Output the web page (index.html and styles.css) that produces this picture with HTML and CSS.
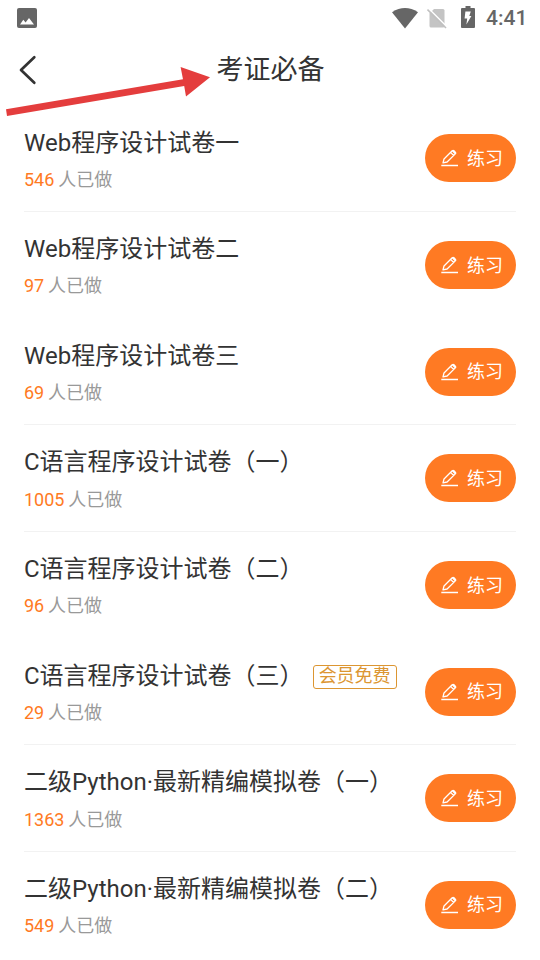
FILE: index.html
```html
<!DOCTYPE html>
<html lang="zh-CN">
<head>
    <meta charset="UTF-8">
    <title>考证必备</title>
    <link rel="stylesheet" href="styles.css">
</head>
<body>
    <!-- 图标 -->
    <svg class="defs" width="0" height="0">
        <symbol id="pen" viewBox="0 0 18 18">
            <path d="M2 13.9 L3 10 L11.2 1.8 Q12.1 .9 13 1.8 L14.3 3.1 Q15.2 4 14.3 4.9 L6.1 13 Z M9.6 3.4 L12.7 6.5 M11.4 1.9 L14.2 4.7" fill="none" stroke="#fff" stroke-width="1.3" stroke-linejoin="round"/>
            <path d="M.3 16.5 H17" stroke="#fff" stroke-width="1.5"/>
        </symbol>
    </svg>

    <div class="status">
        <svg class="photo" width="20" height="20" viewBox="0 0 20 20">
            <rect width="20" height="20" rx="2" fill="#666"/>
            <path d="M3 16.5 L6.3 11.8 L8.6 14.4 L12 10 L17 16.5 Z" fill="#fff"/>
        </svg>
        <svg class="wifi" width="26" height="21" viewBox="0 0 26 21">
            <path d="M0 4.2 Q13 -4.2 26 4.2 L13 20.5 Z" fill="#666"/>
        </svg>
        <svg class="sim" width="20" height="21" viewBox="0 0 20 21">
            <path d="M7 1 H16 Q17.5 1 17.5 2.5 V18 Q17.5 19.5 16 19.5 H4 Q2.5 19.5 2.5 18 V5.5 Z" fill="#c4c4c4"/>
            <path d="M1.5 .5 L20 19" stroke="#fff" stroke-width="1.6"/>
            <path d="M.5 1.5 L19 20" stroke="#c0c0c0" stroke-width="1.6"/>
        </svg>
        <svg class="battery" width="14" height="22" viewBox="0 0 14 22">
            <path d="M4.5 0 H9.5 V2 H13 Q14 2 14 3 V21 Q14 22 13 22 H1 Q0 22 0 21 V3 Q0 2 1 2 H4.5 Z" fill="#666"/>
            <path d="M4.4 5.5 H9.8 L8.3 10 H10.4 L5.4 18.5 L6.2 12.6 H3.6 Z" fill="#fff"/>
        </svg>
        <span class="time">4:41</span>
    </div>

    <div class="header">
        <svg class="back" width="18" height="30" viewBox="0 0 18 30">
            <path d="M15.3 2.3 L2 15 L15.3 27.7" fill="none" stroke="#333" stroke-width="2.7" stroke-linecap="round" stroke-linejoin="round"/>
        </svg>
        <h1>考证必备</h1>
        <svg class="arrow" width="210" height="60" viewBox="0 60 210 60">
            <path d="M6 109.2 L183 79.2 L180.6 67 L210 77.3 L186 96.5 L184.2 86 L7 116 Z" fill="#e43d3d"/>
        </svg>
    </div>

    <ul class="list">
        <li>
            <div class="info">
                <h2>Web程序设计试卷一</h2>
                <p><em>546</em> 人已做</p>
            </div>
            <a class="btn"><svg><use href="#pen"/></svg><span>练习</span></a>
        </li>
        <li class="noline">
            <div class="info">
                <h2>Web程序设计试卷二</h2>
                <p><em>97</em> 人已做</p>
            </div>
            <a class="btn"><svg><use href="#pen"/></svg><span>练习</span></a>
        </li>
        <li>
            <div class="info">
                <h2>Web程序设计试卷三</h2>
                <p><em>69</em> 人已做</p>
            </div>
            <a class="btn"><svg><use href="#pen"/></svg><span>练习</span></a>
        </li>
        <li>
            <div class="info">
                <h2>C语言程序设计试卷（一）</h2>
                <p><em>1005</em> 人已做</p>
            </div>
            <a class="btn"><svg><use href="#pen"/></svg><span>练习</span></a>
        </li>
        <li class="noline">
            <div class="info">
                <h2>C语言程序设计试卷（二）</h2>
                <p><em>96</em> 人已做</p>
            </div>
            <a class="btn"><svg><use href="#pen"/></svg><span>练习</span></a>
        </li>
        <li>
            <div class="info">
                <h2>C语言程序设计试卷（三）<span class="tag">会员免费</span></h2>
                <p><em>29</em> 人已做</p>
            </div>
            <a class="btn"><svg><use href="#pen"/></svg><span>练习</span></a>
        </li>
        <li>
            <div class="info">
                <h2>二级Python·最新精编模拟卷（一）</h2>
                <p><em>1363</em> 人已做</p>
            </div>
            <a class="btn"><svg><use href="#pen"/></svg><span>练习</span></a>
        </li>
        <li class="noline">
            <div class="info">
                <h2>二级Python·最新精编模拟卷（二）</h2>
                <p><em>549</em> 人已做</p>
            </div>
            <a class="btn"><svg><use href="#pen"/></svg><span>练习</span></a>
        </li>
    </ul>
</body>
</html>
```
FILE: styles.css
```css
*{
    margin:0;
    padding:0;
    box-sizing:border-box;
}
body{
    width:540px;
    height:960px;
    overflow:hidden;
    background:#fff;
    color:#333;
    font-family:Roboto,"Noto Sans CJK SC",sans-serif;
}
svg{
    display:block;
    flex:none;
}
.defs{
    position:absolute;
}
.status{
    display:flex;
    align-items:center;
    height:36px;
    padding:0 13px 0 17px;
    color:#666;
}
.wifi{
    margin-left:auto;
}
.sim{
    margin-left:9px;
}
.battery{
    margin:0 0 2px 14px;
}
.time{
    width:41px;
    margin-left:11px;
    font-size:21px;
    font-weight:500;
    line-height:38px;
    white-space:nowrap;
}
.header{
    position:relative;
    display:flex;
    align-items:center;
    height:69px;
    padding-left:19px;
}
.header h1{
    flex:1;
    padding-right:36px;
    font-size:27px;
    font-weight:400;
    line-height:69px;
    text-align:center;
}
.back{
    margin-bottom:1px;
}
/* 红色箭头盖在标题栏上 */
.arrow{
    position:absolute;
    left:0;
    top:24px;
}
.list{
    padding:0 24px;
    list-style:none;
}
.list li{
    display:flex;
    justify-content:space-between;
    height:106.67px;
    border-bottom:1px solid #f2f2f2;
}
.list .noline{
    border-color:transparent;
}
.info{
    padding-top:17px;
}
.info h2{
    display:flex;
    align-items:center;
    height:36px;
    font-size:24px;
    font-weight:400;
    white-space:nowrap;
}
.info p{
    margin-top:3.6px;
    font-size:18px;
    line-height:36px;
    word-spacing:-.6px;
    color:#999;
}
.info em{
    font-style:normal;
    color:#ff7a23;
}
.tag{
    align-self:flex-start;
    height:24px;
    margin:9.6px 0 0 9px;
    padding:0 5px;
    border:1px solid #dc9632;
    border-radius:3px;
    font-size:18px;
    line-height:20px;
    color:#dc9632;
}
.btn{
    display:flex;
    align-items:center;
    width:91px;
    height:48px;
    margin-top:29.4px;
    padding-left:16px;
    border-radius:24px;
    background:#ff7a23;
    color:#fff;
    font-size:18px;
}
.btn svg{
    width:18px;
    height:18px;
    margin-right:8px;
}
.btn span{
    margin-bottom:3px;
}
```
